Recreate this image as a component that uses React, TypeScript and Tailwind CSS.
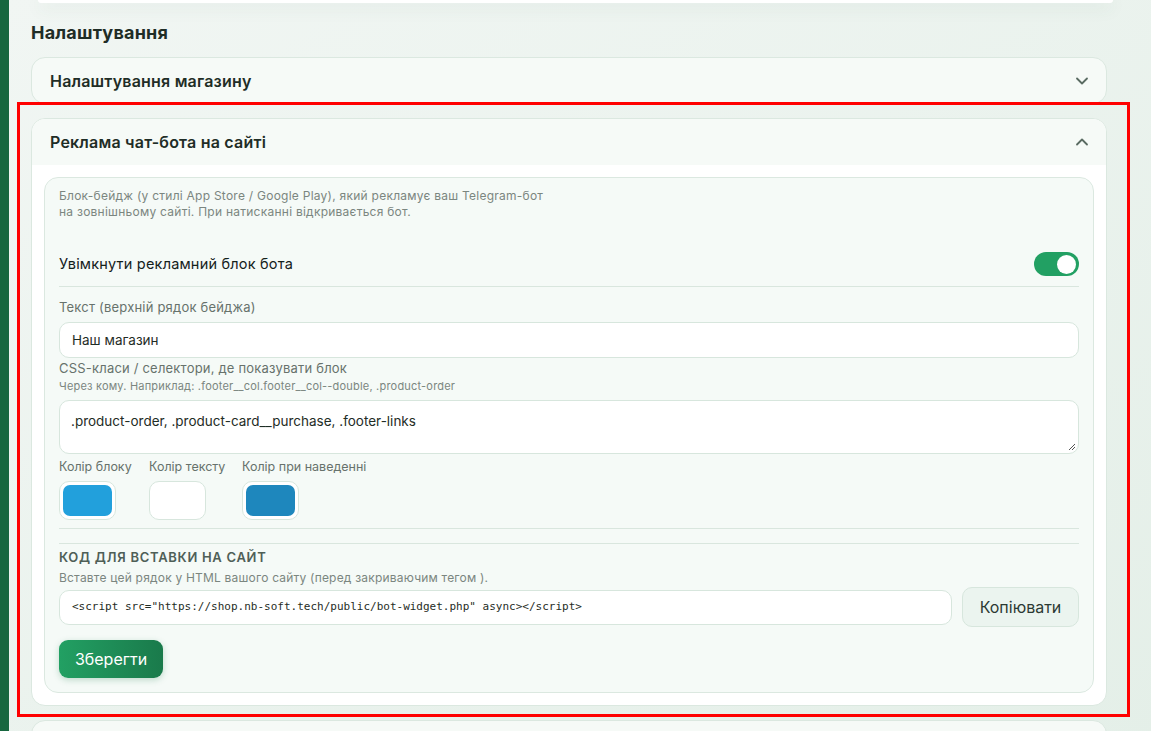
import { ChevronDown, ChevronUp } from "lucide-react";

const font = { fontFamily: "Inter, 'Noto Sans', sans-serif" };

function Swatch({ color }: { color: string }) {
    return (
        <div className="w-[57px] h-[39px] rounded-[10px] border border-[#d7e6dd] bg-white p-[3px]">
            <div className="w-full h-full rounded-[7px]" style={{ background: color }} />
        </div>
    );
}

const colors = [
    { label: "Колір блоку", value: "#22a0dc", width: "w-[90px]" },
    { label: "Колір тексту", value: "#ffffff", width: "w-[93px]" },
    { label: "Колір при наведенні", value: "#1e87bd", width: "w-[140px]" },
];

export default function App() {
    return (
        <div className="relative min-h-[731px] w-[1151px] overflow-hidden bg-gradient-to-br from-[#f1f6f3] to-[#e4efe8] text-[#1f2d26]" style={font}>
            {/* left rail */}
            <div className="absolute left-0 top-0 h-full w-[9px] bg-[#17673f]" />

            <div className="pl-[31px] pr-[44px]">
                {/* top card remnant */}
                <div className="ml-[7px] mr-[-6px] h-[3px] rounded-b-[14px] bg-white shadow-[0_4px_16px_rgba(60,100,80,0.18)]" />

                <h2 className="mt-[20px] text-[18px] font-bold leading-[20px] tracking-[0.2px]">Налаштування</h2>

                <div className="mt-[14px] flex flex-col gap-[14px]">
                    <div className="flex h-[47px] items-center justify-between rounded-[14px] border border-[#dbe8e0] bg-[#f6faf7] pl-[18px] pr-[14px]">
                        <span className="text-[16px] font-semibold tracking-[0.2px]">Налаштування магазину</span>
                        <ChevronDown className="h-5 w-5 text-[#5a6b62]" strokeWidth={2.2} />
                    </div>

                    <div className="overflow-hidden rounded-[14px] border border-[#dbe8e0] bg-white">
                        <div className="flex h-[46px] items-center justify-between bg-[#f6faf7] pl-[18px] pr-[14px]">
                            <span className="text-[16px] font-semibold tracking-[0.2px]">Реклама чат-бота на сайті</span>
                            <ChevronUp className="h-5 w-5 text-[#5a6b62]" strokeWidth={2.2} />
                        </div>

                        <div className="px-[12px] pb-[12px] pt-[12px]">
                            <div className="rounded-[14px] border border-[#dbe8e0] bg-[#f5faf7] px-[14px] pb-[14px] pt-[10px]">
                                <p className="text-[12px] leading-[16px] tracking-[0.25px] text-[#7b8680]">
                                    Блок-бейдж (у стилі App Store / Google Play), який рекламує ваш Telegram-бот
                                    <br />
                                    на зовнішньому сайті. При натисканні відкривається бот.
                                </p>

                                <div className="mt-[32px] flex items-center justify-between border-b border-[#d9e6de] pb-[10px]">
                                    <span className="text-[14.5px] font-normal tracking-[0.2px] text-[#14211b]">Увімкнути рекламний блок бота</span>
                                    <div className="flex h-[24px] w-[45px] items-center justify-end rounded-full bg-[#22a063] pr-[3px]">
                                        <div className="h-[19px] w-[19px] rounded-full bg-white" />
                                    </div>
                                </div>

                                <label className="mt-[11px] block text-[13px] leading-[18px] tracking-[0.2px] text-[#67726c]">Текст (верхній рядок бейджа)</label>
                                <div className="mt-[6px] flex h-[36px] items-center rounded-[10px] border border-[#d7e6dd] bg-white px-[12px] text-[13.5px] text-[#1f2d26]">
                                    Наш магазин
                                </div>

                                <label className="mt-[1px] block text-[13px] leading-[18px] tracking-[0.2px] text-[#67726c]">CSS-класи / селектори, де показувати блок</label>
                                <div className="mt-[2px] text-[11px] leading-[14px] tracking-[0.2px] text-[#7b8680]">
                                    Через кому. Наприклад: .footer__col.footer__col--double, .product-order
                                </div>
                                <div className="relative mt-[7px] h-[54px] rounded-[10px] border border-[#d7e6dd] bg-white px-[11px] pt-[10px] text-[13.5px] text-[#1f2d26]">
                                    .product-order, .product-card__purchase, .footer-links
                                    <svg className="absolute bottom-[2px] right-[2px]" width="8" height="8" viewBox="0 0 8 8">
                                        <path d="M7 1L1 7M7 4L4 7" stroke="#555" strokeWidth="1" />
                                    </svg>
                                </div>

                                <div className="mt-[5px] flex">
                                    {colors.map((c) => (
                                        <div key={c.label} className={c.width}>
                                            <div className="text-[12.5px] leading-[16px] text-[#67726c]">{c.label}</div>
                                            <div className="mt-[6px]"><Swatch color={c.value} /></div>
                                        </div>
                                    ))}
                                </div>

                                <div className="mt-[8px] h-px bg-[#d9e6de]" />
                                <div className="mt-[14px] h-px bg-[#d9e6de]" />

                                <div className="mt-[4px] text-[13px] font-semibold uppercase leading-[18px] tracking-[0.7px] text-[#4f5f57]">
                                    Код для вставки на сайт
                                </div>
                                <div className="mt-[4px] text-[12px] leading-[16px] tracking-[0.2px] text-[#7b8680]">
                                    Вставте цей рядок у HTML вашого сайту (перед закриваючим тегом ).
                                </div>

                                <div className="mt-[1px] flex items-center gap-[10px]">
                                    <div
                                        className="flex h-[35px] flex-1 items-center rounded-[10px] border border-[#d7e6dd] bg-white px-[12px] text-[11px] text-[#1f2d26]"
                                        style={{ fontFamily: "'DejaVu Sans Mono', 'Liberation Mono', monospace" }}
                                    >
                                        {'<script src="https://shop.nb-soft.tech/public/bot-widget.php" async></script>'}
                                    </div>
                                    <button className="h-[40px] w-[117px] rounded-[10px] border border-[#d7e6dd] bg-[#ebf4ef] text-[16px] text-[#2b3a33]">
                                        Копіювати
                                    </button>
                                </div>

                                <button className="mt-[13px] h-[38px] w-[104px] rounded-[9px] bg-gradient-to-r from-[#22a063] to-[#1a7a4b] text-[16px] text-white shadow-[0_2px_6px_rgba(26,122,75,0.25)]">
                                    Зберегти
                                </button>
                            </div>
                        </div>
                    </div>

                    <div className="h-[40px] rounded-[14px] border border-[#dbe8e0] bg-[#f6faf7]" />
                </div>
            </div>

            {/* highlight frame */}
            <div className="pointer-events-none absolute left-[17px] top-[102px] h-[615px] w-[1113px] border-[3px] border-[#ff0000]" />
        </div>
    );
}
